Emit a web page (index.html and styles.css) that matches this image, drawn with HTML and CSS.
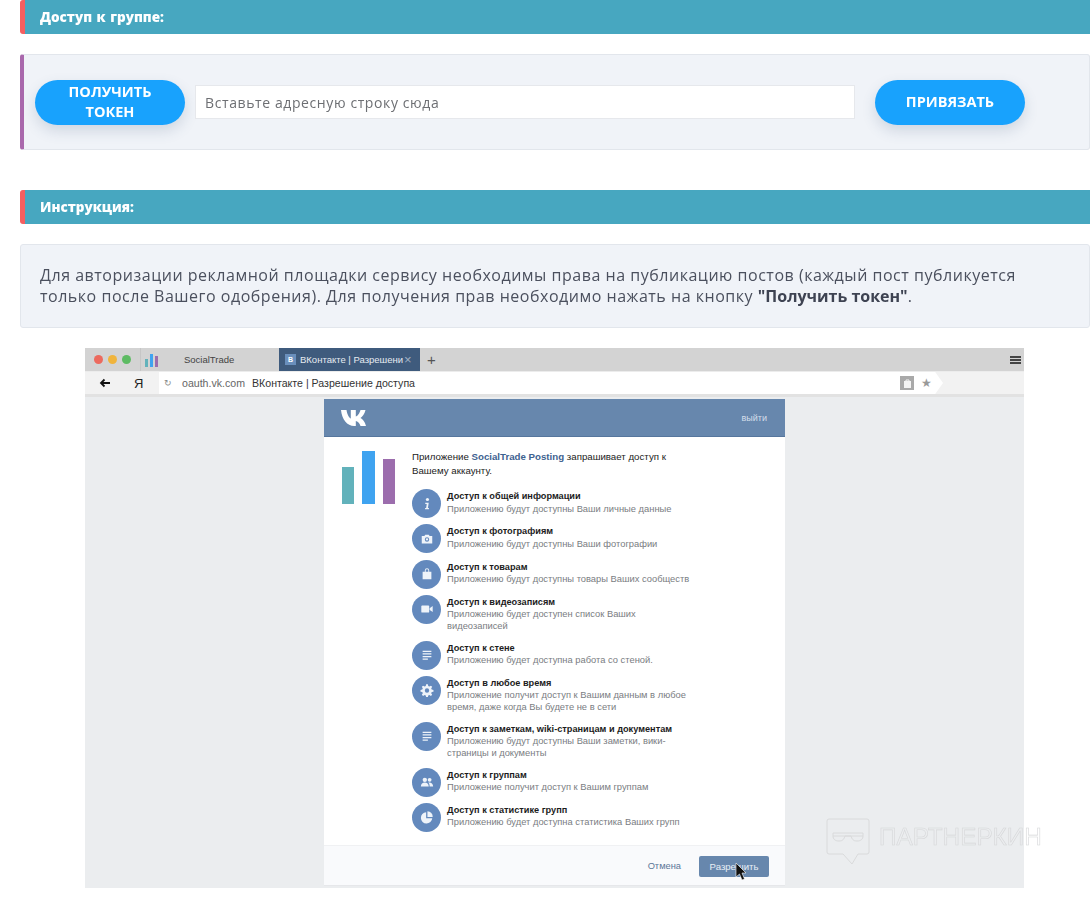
FILE: index.html
```html
<!DOCTYPE html>
<html lang="ru">
<head>
<meta charset="utf-8">
<title>Доступ к группе</title>
<link rel="stylesheet" href="styles.css">
</head>
<body>
<main class="page">
  <h2 class="bar">Доступ к группе:</h2>
  <section class="panel panel-accent">
    <button class="btn">ПОЛУЧИТЬ ТОКЕН</button>
    <input class="field" type="text" placeholder="Вставьте адресную строку сюда">
    <button class="btn btn-bind">ПРИВЯЗАТЬ</button>
  </section>
  <h2 class="bar bar-second">Инструкция:</h2>
  <section class="panel-text">
    Для авторизации рекламной площадки сервису необходимы права на публикацию постов (каждый пост публикуется только после Вашего одобрения). Для получения прав необходимо нажать на кнопку <b>"Получить токен"</b>.
  </section>

  <figure class="mock">
    <div class="tabs">
      <span class="dot dot-r"></span><span class="dot dot-y"></span><span class="dot dot-g"></span>
      <span class="tab-sep"></span>
      <svg class="tab-logo" width="14" height="14" viewBox="0 0 14 14"><rect x="0" y="6" width="3" height="8" fill="#62b2bb"/><rect x="5" y="1" width="3" height="13" fill="#3fa3f0"/><rect x="10" y="3" width="3" height="11" fill="#9c6dad"/></svg>
      <span class="tab-name">SocialTrade</span>
      <div class="tab-active"><span class="favicon">В</span><span class="tab-title">ВКонтакте | Разрешени</span><span class="tab-x">×</span></div>
      <span class="tab-plus">+</span>
      <span class="burger"><i></i><i></i><i></i></span>
    </div>
    <div class="toolbar">
      <svg class="back" width="12" height="10" viewBox="0 0 12 10"><path d="M11 5H2M5.500 1.500 2 5l3.500 3.500" fill="none" stroke="#111" stroke-width="1.800"/></svg>
      <span class="ya">Я</span>
      <div class="address">
        <span class="reload">↻</span>
        <span class="host">oauth.vk.com</span>
        <span class="page-title">ВКонтакте | Разрешение доступа</span>
        <span class="lock"><svg width="7" height="9" viewBox="0 0 7 9"><rect y="2" width="7" height="7" fill="#f4f4f4"/><path d="M2 3V1h3v2" fill="none" stroke="#f4f4f4"/></svg></span>
        <span class="star">★</span>
      </div>
    </div>
    <div class="viewport">
      <div class="card">
        <header class="card-head">
          <svg class="vk" width="29" height="18" viewBox="0 0 29 18"><path d="M0 1h5.500c.7 4.500 2.600 8 4.300 8.500V1h5v6.500c1.800-.3 3.800-3.300 4.700-6.500h5c-.8 3.800-3.200 6.700-5 8 1.900 1 4.500 3.700 5.500 8h-5.500c-.9-2.800-2.900-4.800-4.700-5v5h-1.500C6 17 1 10.500 0 1z" fill="#fff"/></svg>
          <span class="logout">выйти</span>
        </header>
        <div class="card-body">
          <svg class="app-logo" width="54" height="54" viewBox="0 0 54 54"><rect x="0" y="16" width="12" height="37" fill="#62b2bb"/><rect x="20" y="0" width="13" height="53" fill="#3fa3f0"/><rect x="41" y="8" width="12" height="45" fill="#9c6dad"/></svg>
          <div class="perm-col">
            <p class="intro">Приложение <b>SocialTrade Posting</b> запрашивает доступ к Вашему аккаунту.</p>
            <ul class="perms">
              <li class="perm"><span class="ico"><svg viewBox="0 0 16 16"><circle cx="8.500" cy="2.800" r="1.800"/><path d="M6 6.500h4l-1 6h1.200V14H5.800v-1.500H7l.7-4.500H6z"/></svg></span><div class="perm-text"><strong>Доступ к общей информации</strong><span class="sub">Приложению будут доступны Ваши личные данные</span></div></li>
              <li class="perm"><span class="ico"><svg viewBox="0 0 16 16"><path fill-rule="evenodd" d="M2 4.500h3L6 3h4l1 1.500h3V13H2zM8 6a2.500 2.500 0 1 0 0 5 2.500 2.500 0 0 0 0-5z"/><circle cx="8" cy="8.500" r="1.300"/></svg></span><div class="perm-text"><strong>Доступ к фотографиям</strong><span class="sub">Приложению будут доступны Ваши фотографии</span></div></li>
              <li class="perm"><span class="ico"><svg viewBox="0 0 16 16"><path d="M3 5.500h2.500V4a2.500 2.500 0 0 1 5 0v1.500H13V14H3zM6.500 5.500h3V4a1.500 1.500 0 0 0-3 0z" fill-rule="evenodd"/></svg></span><div class="perm-text"><strong>Доступ к товарам</strong><span class="sub">Приложению будут доступны товары Ваших сообществ</span></div></li>
              <li class="perm"><span class="ico"><svg viewBox="0 0 16 16"><rect x="1.500" y="4" width="9" height="8" rx="1"/><path d="M11 7l3.500-2.500v7L11 9z"/></svg></span><div class="perm-text"><strong>Доступ к видеозаписям</strong><span class="sub">Приложению будет доступен список Ваших видеозаписей</span></div></li>
              <li class="perm"><span class="ico"><svg viewBox="0 0 16 16"><path d="M3 3h10v1.500H3zM3 6h10v1.500H3zM3 9h10v1.500H3zM3 12h6v1.500H3z"/></svg></span><div class="perm-text"><strong>Доступ к стене</strong><span class="sub">Приложению будет доступна работа со стеной.</span></div></li>
              <li class="perm"><span class="ico"><svg viewBox="0 0 16 16"><path fill-rule="evenodd" d="M7 1.500h2l.4 2 1.300.6 1.800-1.100 1.400 1.400-1.100 1.800.6 1.300 2 .4v2l-2 .4-.6 1.300 1.100 1.800-1.400 1.400-1.800-1.100-1.300.6-.4 2H7l-.4-2-1.300-.6-1.800 1.100-1.400-1.400 1.100-1.800-.6-1.300-2-.4v-2l2-.4.6-1.300L2.100 4.400l1.400-1.400 1.800 1.100 1.300-.6zM8 6a2.500 2.500 0 1 0 0 5 2.500 2.500 0 0 0 0-5z"/></svg></span><div class="perm-text"><strong>Доступ в любое время</strong><span class="sub">Приложение получит доступ к Вашим данным в любое время, даже когда Вы будете не в сети</span></div></li>
              <li class="perm"><span class="ico"><svg viewBox="0 0 16 16"><path d="M3 3h10v1.500H3zM3 6h10v1.500H3zM3 9h10v1.500H3zM3 12h6v1.500H3z"/></svg></span><div class="perm-text"><strong>Доступ к заметкам, wiki-страницам и документам</strong><span class="sub">Приложению будут доступны Ваши заметки, вики-страницы и документы</span></div></li>
              <li class="perm"><span class="ico"><svg viewBox="0 0 16 16"><circle cx="5.500" cy="5.500" r="2.500"/><circle cx="11" cy="5.500" r="2.200"/><path d="M1 13c0-3 2-4.500 4.500-4.500S10 10 10 13zM11 13c0-2-.5-3.300-1.500-4.300 2.500-.6 5.500.8 5.500 4.300z"/></svg></span><div class="perm-text"><strong>Доступ к группам</strong><span class="sub">Приложение получит доступ к Вашим группам</span></div></li>
              <li class="perm"><span class="ico"><svg viewBox="0 0 16 16"><path d="M7 2.500v7h7A6.500 6.500 0 1 1 7 2.500z"/><path d="M8.500 1.500A6 6 0 0 1 14.500 8h-6z"/></svg></span><div class="perm-text"><strong>Доступ к статистике групп</strong><span class="sub">Приложению будет доступна статистика Ваших групп</span></div></li>
            </ul>
          </div>
        </div>
        <footer class="card-foot">
          <span class="cancel">Отмена</span>
          <span class="allow">Разрешить</span>
        </footer>
      </div>
    </div>
    <svg class="cursor" width="12" height="19" viewBox="0 0 12 19"><path d="M1 1v14l3.500-3 2.500 6 2.500-1-2.500-6H11z" fill="#111" stroke="#fff" stroke-width=".6"/></svg>
    <div class="watermark">
      <svg width="44" height="48" viewBox="0 0 44 48"><path d="M3 1h38a2 2 0 0 1 2 2v31a2 2 0 0 1-2 2H32l-6 10-9-10H3a2 2 0 0 1-2-2V3a2 2 0 0 1 2-2z" fill="none" stroke="#d9dadb"/><path d="M7 15h30v3c0 3-2 5-6 5-4 0-5-2-6-5h-6c-1 3-2 5-6 5-4 0-6-2-6-5zM7 18h30" fill="none" stroke="#d9dadb"/></svg>
      <span class="wm-text">ПАРТНЕРКИН</span>
    </div>
  </figure>
</main>
</body>
</html>
```
FILE: styles.css
```css
* { box-sizing: border-box; }
html, body { margin: 0; padding: 0; background: #fff; }
body { font-family: "Open Sans", "Noto Sans", "Liberation Sans", sans-serif; color: #4a4f5c; }
.page { padding: 0 2px 29px 20px; filter: blur(.3px); }

.bar {
  height: 34px;
  margin: 0 0 20px;
  padding: 0 0 0 15px;
  background: #47a7c0;
  border-left: 5px solid #f55f60;
  border-radius: 3px 0 0 3px;
  color: #fff;
  font-size: 13.500px;
  font-weight: 800;
  line-height: 34px;
  word-spacing: 1px;
}
.bar-second { margin-top: 40px; }

.panel {
  display: flex;
  align-items: center;
  height: 96px;
  background: #f0f3f8;
  border: 1px solid #e2e6ec;
  border-left: 4px solid #a968ac;
  border-radius: 3px;
  padding-left: 11px;
}
.btn {
  width: 150px;
  height: 45px;
  padding: 0 25px;
  border: 0;
  border-radius: 23px;
  background: #18a2fd;
  box-shadow: 0 6px 14px rgba(60, 90, 130, .18);
  color: #fff;
  font-family: inherit;
  font-size: 14.500px;
  font-weight: 700;
  line-height: 20px;
}
.btn-bind { margin-left: 20px; }
.field {
  width: 660px;
  height: 34px;
  margin-left: 10px;
  padding: 0 9px;
  background: #fff;
  border: 1px solid #e6e8ec;
  font-family: inherit;
  font-size: 14px;
  letter-spacing: .6px;
}
.field::placeholder { color: #6d6f73; opacity: 1; }

.panel-text {
  height: 84px;
  padding: 20px 50px 20px 19px;
  background: #f0f3f8;
  border: 1px solid #e2e6ec;
  border-radius: 3px;
  font-size: 16px;
  letter-spacing: .52px;
  line-height: 21px;
  color: #4b505e;
}
.panel-text b { color: #3e4352; letter-spacing: 0; }

.mock {
  position: relative;
  width: 939px;
  height: 540px;
  margin: 20px 0 0 65px;
  display: flex;
  flex-direction: column;
  background: #ebedef;
  font-family: "Liberation Sans", sans-serif;
  color: #222;
  filter: blur(.35px);
}
.tabs {
  display: flex;
  align-items: center;
  height: 23px;
  background: #d3d3d3;
  padding-left: 9px;
  flex: none;
}
.dot { width: 9px; height: 9px; border-radius: 50%; margin-right: 5px; }
.dot-r { background: #ec6a5e; }
.dot-y { background: #f0b43c; }
.dot-g { background: #5dbb63; margin-right: 0; }
.tab-sep { width: 1px; height: 23px; background: #c6c6c6; margin-left: 9px; }
.tab-logo { margin-left: 4px; }
.tab-name { margin-left: 25px; width: 95px; font-size: 9.500px; color: #444; }
.tab-active {
  display: flex;
  align-items: center;
  width: 141px;
  height: 23px;
  background: #3f5b7d;
  color: #e6ebf1;
  font-size: 9.500px;
  padding-left: 6px;
}
.favicon {
  width: 11px;
  height: 11px;
  background: #6a8fbc;
  color: #fff;
  font-size: 7px;
  font-weight: 700;
  line-height: 11px;
  text-align: center;
  flex: none;
}
.tab-title { margin-left: 4px; width: 104px; overflow: hidden; white-space: nowrap; }
.tab-x { color: #9fb0c4; font-size: 13px; }
.tab-plus { margin-left: 7px; font-size: 15px; color: #555; }
.burger { margin-left: auto; margin-right: 3px; display: flex; flex-direction: column; gap: 1px; }
.burger i { display: block; width: 11px; height: 2px; background: #444; }

.toolbar {
  display: flex;
  align-items: center;
  height: 26px;
  flex: none;
  background: #f2f2f2;
  border-top: 1px solid #ececec;
  border-bottom: 3px solid #e2e2e2;
  padding-left: 14px;
}
.back { flex: none; }
.ya { margin-left: 23px; width: 25px; font-size: 13px; color: #222; }
.address {
  display: flex;
  align-items: center;
  width: 784px;
  height: 22px;
  background: #fff;
  padding-left: 5px;
  font-size: 10.600px;
  clip-path: polygon(0 0, 99% 0, 100% 50%, 99% 100%, 0 100%);
}
.reload { width: 18px; color: #888; font-size: 9px; }
.host { color: #666; width: 70px; }
.page-title { color: #333; }
.lock {
  display: flex;
  align-items: center;
  justify-content: center;
  width: 14px;
  height: 14px;
  margin-left: auto;
  margin-right: 7px;
  background: #a9a9a9;
}
.star { margin-right: 11px; color: #999; font-size: 12px; }

.viewport { flex: 1; display: flex; justify-content: center; padding: 2px 0; min-height: 0; }
.card {
  width: 461px;
  display: flex;
  flex-direction: column;
  background: #fff;
}
.card-head {
  height: 38px;
  flex: none;
  display: flex;
  align-items: center;
  justify-content: space-between;
  background: #6787ad;
  padding: 0 18px 0 17px;
  border-bottom: 1px solid #56769d;
}
.logout { color: #d5dfeb; font-size: 9px; }
.card-body { flex: 1; display: flex; padding: 13px 0 0 18px; min-height: 0; }
.app-logo { flex: none; margin-top: 1px; }
.perm-col { margin-left: 16px; width: 280px; }
.intro { margin: 0; font-size: 9.700px; line-height: 14px; color: #222; width: 268px; }
.intro b { color: #3e6290; }
.perms { list-style: none; margin: 11px 0 0; padding: 0; }
.perm { display: flex; padding-bottom: 6.300px; }
.ico {
  display: flex;
  align-items: center;
  justify-content: center;
  width: 29px;
  height: 29px;
  flex: none;
  margin-right: 6px;
  border-radius: 50%;
  background: #6389bd;
}
.ico svg { width: 14px; height: 14px; fill: #eef3f9; }
.perm-text { padding-bottom: 2px; font-size: 9.350px; line-height: 11.500px; }
.perm strong { display: block; color: #1c1c1c; font-weight: 700; font-size: 9.200px; line-height: 12px; padding-top: 1px; }
.sub { display: block; color: #7a7d82; margin-top: 1.500px; }

.card-foot {
  height: 41px;
  flex: none;
  display: flex;
  align-items: center;
  justify-content: flex-end;
  padding: 1px 16px 0 0;
  background: #f9fafc;
  border-top: 1px solid #f0f1f3;
  border-bottom: 1px solid #e6e7ea;
  font-size: 9.300px;
}
.cancel { color: #5b7698; margin-right: 18px; }
.allow {
  width: 70px;
  height: 21px;
  background: #6787ad;
  border-radius: 2px;
  color: #e8eef5;
  font-size: 9.600px;
  line-height: 21px;
  text-align: center;
}
.cursor { position: absolute; left: 650px; top: 514px; }
.watermark {
  position: absolute;
  left: 741px;
  top: 470px;
  display: flex;
  align-items: flex-start;
}
.wm-text {
  margin: 7px 0 0 9px;
  font-family: "Liberation Sans", sans-serif;
  font-size: 24.300px;
  line-height: 24px;
  white-space: nowrap;
  color: transparent;
  -webkit-text-stroke: .6px #d6d7d9;
}
```
